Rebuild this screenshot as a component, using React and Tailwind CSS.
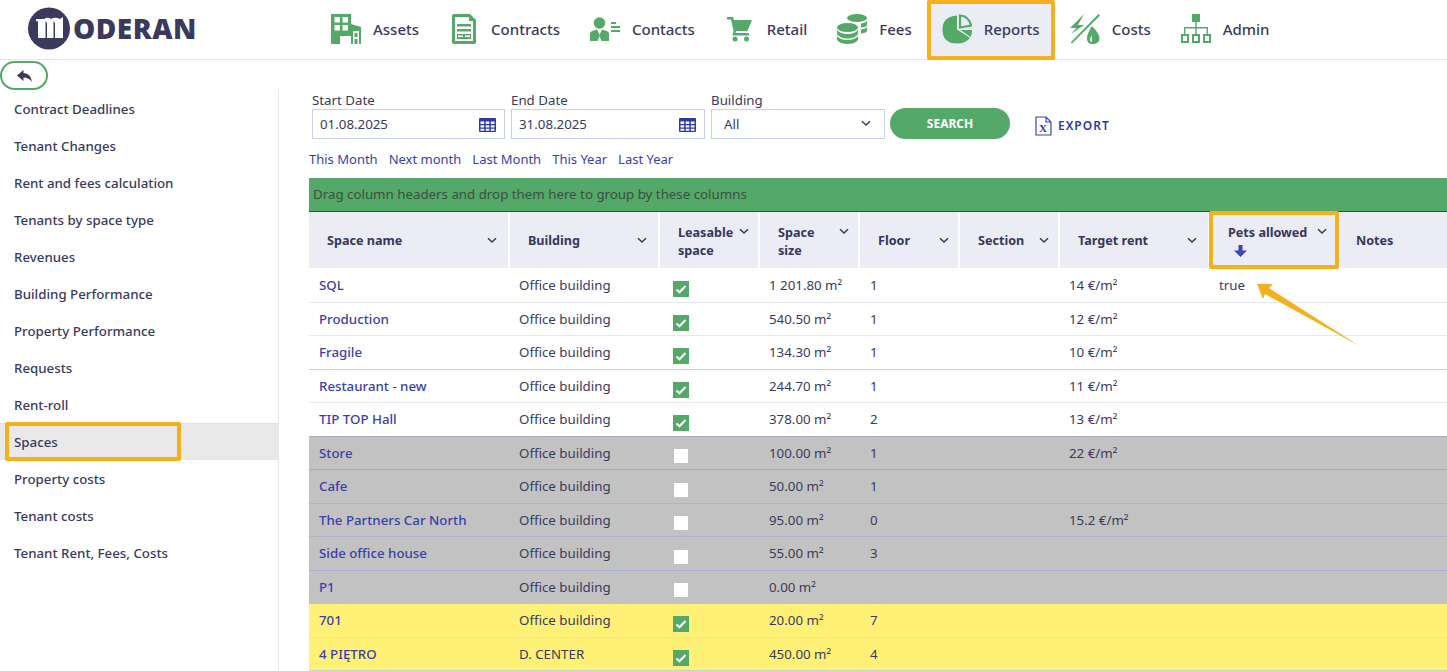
import React from "react";

const G = "#54a868";

function Assets() {
  return (
    <svg width="30" height="30" viewBox="0 0 30 30" className="shrink-0">
      <path fill={G} d="M0 0H20V10L30 13V30H20V22H9V30H0Z" />
      <path fill="#fff" d="M3.500 3H9V8.500H3.500Z M11.500 3H17V8.500H11.500Z M3.500 11H9V16.500H3.500Z M11.500 11H17V16.500H11.500Z M9 22H20V30H9Z" />
      <path fill="#fff" fillRule="evenodd" d="M22 17L28 17V30H22Z M23.500 19V23H26.500V19Z M23.500 25V30H26.500V25Z" />
    </svg>
  );
}
function Contracts() {
  return (
    <svg width="30" height="30" viewBox="0 0 30 30" className="shrink-0">
      <path fill={G} d="M3 2Q3 0 5 0H21L27 6V28Q27 30 25 30H5Q3 30 3 28Z" />
      <path fill="#fff" d="M6 3H20V7H24V27H6Z" />
      <path fill={G} d="M8 10H22V12.500H8Z M8 15H22V17.500H8Z M8 20H22V25H8Z" />
      <path fill="#fff" d="M9 21.500H14V23H9Z M16 21.500H21V23H16Z" />
    </svg>
  );
}
function Contacts() {
  return (
    <svg width="30" height="30" viewBox="0 0 30 30" className="shrink-0">
      <circle cx="9.500" cy="9" r="5.800" fill={G} />
      <path fill={G} d="M0 27V20Q0 17 4 16.500L7 15.500L9.500 21L12 15.500L15 16.500Q19 17 19 20V27H11.500L9.500 22L7.500 27Z" />
      <path fill={G} d="M21 8H26V10H21Z M21 12H30V14H21Z M21 16H30V18H21Z" />
    </svg>
  );
}
function Retail() {
  return (
    <svg width="30" height="30" viewBox="0 0 30 30" className="shrink-0">
      <path fill={G} d="M2 3H8L9 6H27L22.500 17H11L10.500 19H24V21.500H7.500L8.500 16.500L6 5.500H2Z" />
      <circle cx="10" cy="25" r="2.500" fill={G} />
      <circle cx="21.500" cy="25" r="2.500" fill={G} />
    </svg>
  );
}
function Fees() {
  return (
    <svg width="30" height="30" viewBox="0 0 30 30" className="shrink-0">
      <ellipse cx="20" cy="4" rx="10" ry="4" fill={G} />
      <path fill={G} d="M24 9.500Q28 9 30 7V11Q29 13 24 13.500Z M24 15.500Q28 15 30 13V17Q29 19 24 19.500Z" />
      <ellipse cx="10.500" cy="13.500" rx="10.500" ry="4.500" fill={G} />
      <path fill={G} d="M0 16Q3 20 10.500 20Q18 20 21 16V20Q18 24.500 10.500 24.500Q3 24.500 0 20Z" />
      <path fill={G} d="M0 22Q3 26 10.500 26Q18 26 21 22V26Q18 30 10.500 30Q3 30 0 26Z" />
    </svg>
  );
}
function Reports() {
  return (
    <svg width="30" height="30" viewBox="0 0 30 30" className="shrink-0">
      <path fill={G} d="M15 1.500V15.500L28 24Q23 29.500 15 29.500Q0.500 29.500 0.500 15.500Q0.500 2.500 15 1.500Z" />
      <path fill={G} d="M18.500 16H30V17Q30 20 28.500 23Z" />
      <path fill="none" stroke={G} strokeWidth="2.200" d="M18 1.500Q27 2 29 11.500L18 13.500Z" />
    </svg>
  );
}
function Costs() {
  return (
    <svg width="30" height="30" viewBox="0 0 30 30" className="shrink-0">
      <path fill={G} d="M14 0L0 14H6.500L1 20L14 11H8Z" />
      <path fill={G} d="M28.500 0L30 1.500L2 29.500L0.800 28.200Z" />
      <path fill={G} fillRule="evenodd" d="M22 12Q29.500 20 29.500 24Q29.500 30 22 30Q17 30 17 24Q17 20 22 12Z M22 21Q20 24 20 26Q20 28 22 28Z" />
    </svg>
  );
}
function Admin() {
  return (
    <svg width="30" height="30" viewBox="0 0 30 30" className="shrink-0">
      <path fill={G} d="M11 0H19V8H11Z" />
      <path fill={G} d="M14.300 8H15.700V13H27V20H25.700V14.500H15.700V20H14.300V14.500H4.300V20H3V13H14.300Z" />
      <path fill="none" stroke={G} strokeWidth="2" d="M1 21H7V28H1Z M12 21H18V28H12Z M23 21H29V28H23Z" />
    </svg>
  );
}
function Chevron() {
  return (
    <svg width="10" height="7" viewBox="0 0 10 7" className="shrink-0 block">
      <path d="M1 1.200L5 5L9 1.200" fill="none" stroke="#3a3a5c" strokeWidth="1.500" />
    </svg>
  );
}
function Calendar() {
  return (
    <svg width="17" height="14" viewBox="0 0 17 14" className="shrink-0">
      <path fill="#3039a8" d="M1 0H16Q17 0 17 1V13Q17 14 16 14H1Q0 14 0 13V1Q0 0 1 0Z" />
      <path fill="#fff" d="M1.500 3.500H5.200V6H1.500Z M6.700 3.500H10.300V6H6.700Z M11.800 3.500H15.500V6H11.800Z M1.500 7.200H5.200V9.500H1.500Z M6.700 7.200H10.300V9.500H6.700Z M11.800 7.200H15.500V9.500H11.800Z M1.500 10.700H5.200V12.700H1.500Z M6.700 10.700H10.300V12.700H6.700Z M11.800 10.700H15.500V12.700H11.800Z" />
    </svg>
  );
}
function Check({ on }) {
  if (!on) return <span className="block w-[14px] h-[14px] mx-px -mt-px bg-white" />;
  return (
    <svg width="16" height="16" viewBox="0 0 16 16" className="block">
      <rect width="16" height="16" fill={G} />
      <path d="M3.500 8.500L6.500 11.300L12.500 5" fill="none" stroke="#fff" strokeWidth="2" />
    </svg>
  );
}

const navItems = [
  ["Assets", Assets],
  ["Contracts", Contracts],
  ["Contacts", Contacts],
  ["Retail", Retail],
  ["Fees", Fees],
];
const navItems2 = [
  ["Costs", Costs],
  ["Admin", Admin],
];
const side = [
  "Contract Deadlines",
  "Tenant Changes",
  "Rent and fees calculation",
  "Tenants by space type",
  "Revenues",
  "Building Performance",
  "Property Performance",
  "Requests",
  "Rent-roll",
  "Spaces",
  "Property costs",
  "Tenant costs",
  "Tenant Rent, Fees, Costs",
];
const rows = [
  ["SQL", "Office building", true, "1 201.80", "1", "14 €/m²", "true", "w", "border-[#e8e8f2]"],
  ["Production", "Office building", true, "540.50", "1", "12 €/m²", "", "w", "border-[#e8e8f2]"],
  ["Fragile", "Office building", true, "134.30", "1", "10 €/m²", "", "w", "border-[#c8cfe8]"],
  ["Restaurant - new", "Office building", true, "244.70", "1", "11 €/m²", "", "w", "border-[#e8e8f2]"],
  ["TIP TOP Hall", "Office building", true, "378.00", "2", "13 €/m²", "", "w", "border-[#a9abc0]"],
  ["Store", "Office building", false, "100.00", "1", "22 €/m²", "", "g", "border-[#a9abc0]"],
  ["Cafe", "Office building", false, "50.00", "1", "", "", "g", "border-[#b2b4c6]"],
  ["The Partners Car North", "Office building", false, "95.00", "0", "15.2 €/m²", "", "g", "border-[#b2b4c6]"],
  ["Side office house", "Office building", false, "55.00", "3", "", "", "g", "border-[#a9afd0]"],
  ["P1", "Office building", false, "0.00", "", "", "", "g", "border-[#c2c2c2]"],
  ["701", "Office building", true, "20.00", "7", "", "", "y", "border-[#f2e87e]"],
  ["4 PIĘTRO", "D. CENTER", true, "450.00", "4", "", "", "y", "border-[#c8cfe8]"],
];
const gridCols = "grid grid-cols-[201px_150px_100px_100px_100px_100px_150px_130px_107px]";

function Head({ label, chev = "pr-[11px]", two }) {
  return (
    <div className={`h-[56px] mr-[2px] bg-[#ebecf4] flex ${two ? "items-start pt-[12px]" : "items-center pt-[2px]"} justify-between pl-[18px] ${chev}`}>
      <span className="text-[12.6px] leading-[18px] font-bold text-[#37375a]">{label}</span>
      <span className={two ? "mt-[4px]" : "mb-[2px]"}><Chevron /></span>
    </div>
  );
}

function Field({ label, value, w }) {
  return (
    <div className={`${w} flex flex-col`}>
      <label className="text-[13.3px] leading-[16px] h-[19px] pt-[2px] text-[#3a3a5c]">{label}</label>
      <div className="h-[30px] border border-[#c8cfe8] flex items-center justify-between pl-[7px] pr-[8px] pt-[1px] text-[13.3px] text-[#3a3a5c]">
        <span>{value}</span>
        <Calendar />
      </div>
    </div>
  );
}

export default function App() {
  return (
    <div className="relative w-[1447px] h-[671px] overflow-hidden bg-white text-[#3a3a5c] [font-family:'Noto_Sans','Open_Sans',sans-serif]">
      <header className="h-[60px] flex border-b border-[#e8e8f0]">
        <div className="w-[316px] shrink-0 flex items-center pl-[28px] pb-[3px]">
          <svg width="42" height="43" viewBox="0 0 42 43" className="shrink-0">
            <circle cx="21" cy="21.500" r="21" fill="#3b3a5c" />
            <path fill="#fff" d="M8 12H16Q20 9.500 23 12Q27 9.500 32 12L35 10V31H27V16L25.500 14V31H19V16L17.500 14V31H10V14L8 14.500Z" />
          </svg>
          <span className="ml-[3px] text-[28px] leading-none font-extrabold tracking-[0.5px] text-[#3b3a5c] [font-family:'Open_Sans',sans-serif]">ODERAN</span>
        </div>
        <nav className="flex h-[60px]">
          {navItems.map(([t, I]) => (
            <a key={t} className="flex items-center gap-[12px] px-[15px] pb-[2px] text-[15px] font-medium text-[#3a3a5c]">
              <I />
              <span>{t}</span>
            </a>
          ))}
          <a className="flex items-center gap-[12px] pl-[11px] pr-[10px] pb-[2px] w-[128px] border-4 border-[#f5b01e] rounded-[2px] bg-[#ebecf4] text-[15px] font-medium">
            <Reports />
            <span>Reports</span>
          </a>
          {navItems2.map(([t, I]) => (
            <a key={t} className="flex items-center gap-[12px] px-[15px] pb-[2px] text-[15px] font-medium text-[#3a3a5c]">
              <I />
              <span>{t}</span>
            </a>
          ))}
        </nav>
      </header>

      <div className="flex h-[611px]">
        <aside className="w-[279px] shrink-0 flex flex-col">
          <div className="h-[30px] pt-px">
            <button className="w-[48px] h-[29px] border-2 border-[#54a868] rounded-full flex items-center justify-center">
              <svg width="15" height="12" viewBox="0 0 15 12">
                <path fill="#3b3a5c" d="M6.500 0V3Q14 3.500 15 12Q12 7.500 6.500 7.500V11L0 5.500Z" />
              </svg>
            </button>
          </div>
          <div className="flex-1 border-r border-[#e8e8f0] pt-[1px]">
            {side.map((s) => (
              <div key={s} className={`relative h-[37px] flex items-center pl-[14px] text-[13.3px] font-medium ${s === "Spaces" ? "-mt-px mb-px pt-[2px] bg-[#e9e9e9] border-t border-[#dfdfdf]" : ""}`}>
                {s}
                {s === "Spaces" && <span className="absolute left-[5px] top-[-2px] w-[176px] h-[39px] border-4 border-[#f5b01e] rounded-[2px]" />}
              </div>
            ))}
          </div>
        </aside>

        <main className="flex-1 pl-[30px] min-w-0">
          <div className="h-[118px] pt-[30px]">
            <div className="flex items-start pl-[3px]">
              <Field label="Start Date" value="01.08.2025" w="w-[193px]" />
              <div className="w-[6px]" />
              <Field label="End Date" value="31.08.2025" w="w-[194px]" />
              <div className="w-[6px]" />
              <div className="w-[174px] flex flex-col">
                <label className="text-[13.3px] leading-[16px] h-[19px] pt-[2px] text-[#3a3a5c]">Building</label>
                <div className="h-[30px] border border-[#c8cfe8] flex items-center justify-between pl-[12px] pr-[13px] pt-[1px] text-[13.3px]">
                  <span>All</span>
                  <span className="mb-[3px]"><Chevron /></span>
                </div>
              </div>
              <button className="ml-[5px] mt-[18px] w-[120px] h-[31px] rounded-full bg-[#54a868] text-white text-[12px] font-bold">SEARCH</button>
              <div className="ml-[25px] mt-[21px] h-[30px] flex items-center gap-[6px] text-[12px] font-semibold tracking-[1px] text-[#3039a8]">
                <svg width="17" height="20" viewBox="0 0 17 20">
                  <path d="M1 1H11L16 6V19H1Z M11 1V6H16" fill="none" stroke="#3b46b4" strokeWidth="1.200" />
                  <text x="8.500" y="16" textAnchor="middle" fontSize="11" fontWeight="700" fontFamily="Liberation Serif, serif" fill="#3039a8">X</text>
                </svg>
                EXPORT
              </div>
            </div>
            <div className="flex gap-[11px] text-[13px] leading-[18px] mt-[9px] text-[#3b3fa8]">
              <a>This Month</a>
              <a>Next month</a>
              <a>Last Month</a>
              <a>This Year</a>
              <a>Last Year</a>
            </div>
          </div>

          <div className="h-[34px] bg-[#54a868] border-b border-[#3a4a48] flex items-center pl-[4px] pt-[1px] text-[13.3px] text-[#3d4f44]">
            Drag column headers and drop them here to group by these columns
          </div>

          <div className={gridCols}>
            <Head label="Space name" />
            <Head label="Building" />
            <Head label={<>Leasable<br />space</>} two chev="pr-[9px]" />
            <Head label={<>Space<br />size</>} two chev="pr-[9px]" />
            <Head label="Floor" chev="pr-[9px]" />
            <Head label="Section" chev="pr-[9px]" />
            <Head label="Target rent" />
            <div className="relative h-[56px] mr-[2px] bg-[#ebecf4] pl-[18px] pr-[11px] pt-[12px]">
              <div className="flex justify-between items-start">
                <span className="text-[12.6px] leading-[18px] font-bold text-[#37375a]">Pets allowed</span>
                <span className="mt-[4px]"><Chevron /></span>
              </div>
              <svg width="13" height="12" viewBox="0 0 13 12" className="ml-[6px] mt-[3px]">
                <path fill="#3b46b4" d="M4.500 0H8.500V5.500H13L6.500 12L0 5.500H4.500Z" />
              </svg>
              <span className="absolute left-[-1px] top-[-1px] w-[130px] h-[58px] border-4 border-[#f5b01e] rounded-[2px]" />
            </div>
            <div className="h-[56px] bg-[#ebecf4] flex items-center pl-[16px] pt-[2px] text-[12.6px] font-bold text-[#37375a]">Notes</div>
          </div>

          {rows.map((r, i) => (
            <div key={r[0]} className={`${gridCols} ${i === 0 ? "h-[34.500px]" : "h-[33.500px]"} pt-[2px] border-b items-center text-[13.3px] ${r[8]} ${r[7] === "g" ? "bg-[#c2c2c2]" : r[7] === "y" ? "bg-[#fff176]" : "bg-white"}`}>
              <a className="pl-[10px] font-medium text-[#3b3fa8] whitespace-nowrap">{r[0]}</a>
              <span className="pl-[9px]">{r[1]}</span>
              <span className="pl-[13px] pt-[6px]"><Check on={r[2]} /></span>
              <span className="pl-[9px]">{r[3]} m²</span>
              <span className="pl-[10px]">{r[4]}</span>
              <span />
              <span className="pl-[9px]">{r[5]}</span>
              <span className="pl-[9px]">{r[6]}</span>
              <span />
            </div>
          ))}
        </main>
      </div>

      <svg width="110" height="70" viewBox="0 0 110 70" className="absolute left-[1252px] top-[280px]">
        <path fill="#f5b01e" d="M5 4L21 4L17 8L107.500 66L13 14L11 19Z" />
      </svg>
    </div>
  );
}
